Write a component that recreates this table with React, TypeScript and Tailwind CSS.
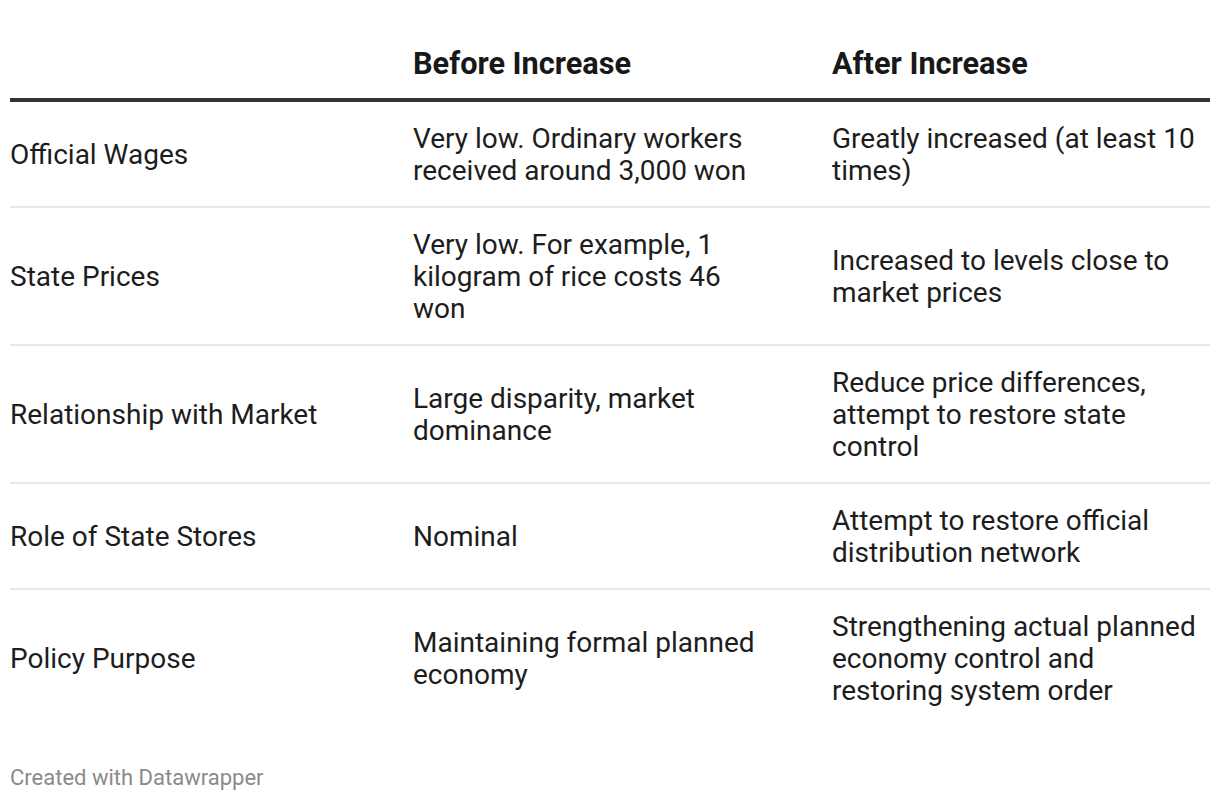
import React from "react";

const rows: [string, string, string][] = [
  ["Official Wages", "Very low. Ordinary workers received around 3,000 won", "Greatly increased (at least 10 times)"],
  ["State Prices", "Very low. For example, 1 kilogram of rice costs 46 won", "Increased to levels close to market prices"],
  ["Relationship with Market", "Large disparity, market dominance", "Reduce price differences, attempt to restore state control"],
  ["Role of State Stores", "Nominal", "Attempt to restore official distribution network"],
  ["Policy Purpose", "Maintaining formal planned economy", "Strengthening actual planned economy control and restoring system order"],
];

export default function App() {
  return (
    <div
      className="w-[1220px] h-[802px] bg-white px-[10px] pt-[48px] text-[#1d1d1d]"
      style={{ fontFamily: "Roboto, 'Liberation Sans', sans-serif" }}
    >
      <div className="grid grid-cols-[403px_419px_378px] border-b-4 border-[#333333] pb-[18px]">
        <div />
        <div className="text-[30.7px] leading-[32px] font-bold text-[#181818]">Before Increase</div>
        <div className="text-[30.7px] leading-[32px] font-bold text-[#181818]">After Increase</div>
      </div>
      {rows.map((r, i) => (
        <div
          key={i}
          className={
            "grid grid-cols-[403px_419px_378px] items-center pt-[21px] pb-[19px] text-[28px] leading-[32px] " +
            (i < rows.length - 1 ? "border-b-2 border-[#e8e8e8]" : "")
          }
        >
          <div className="pr-[20px]">{r[0]}</div>
          <div className="pr-[69px]">{r[1]}</div>
          <div className="pr-[8px]">{r[2]}</div>
        </div>
      ))}
      <div className="mt-[41px] text-[22px] leading-[22px] text-[#8a8a8a]">Created with Datawrapper</div>
    </div>
  );
}
